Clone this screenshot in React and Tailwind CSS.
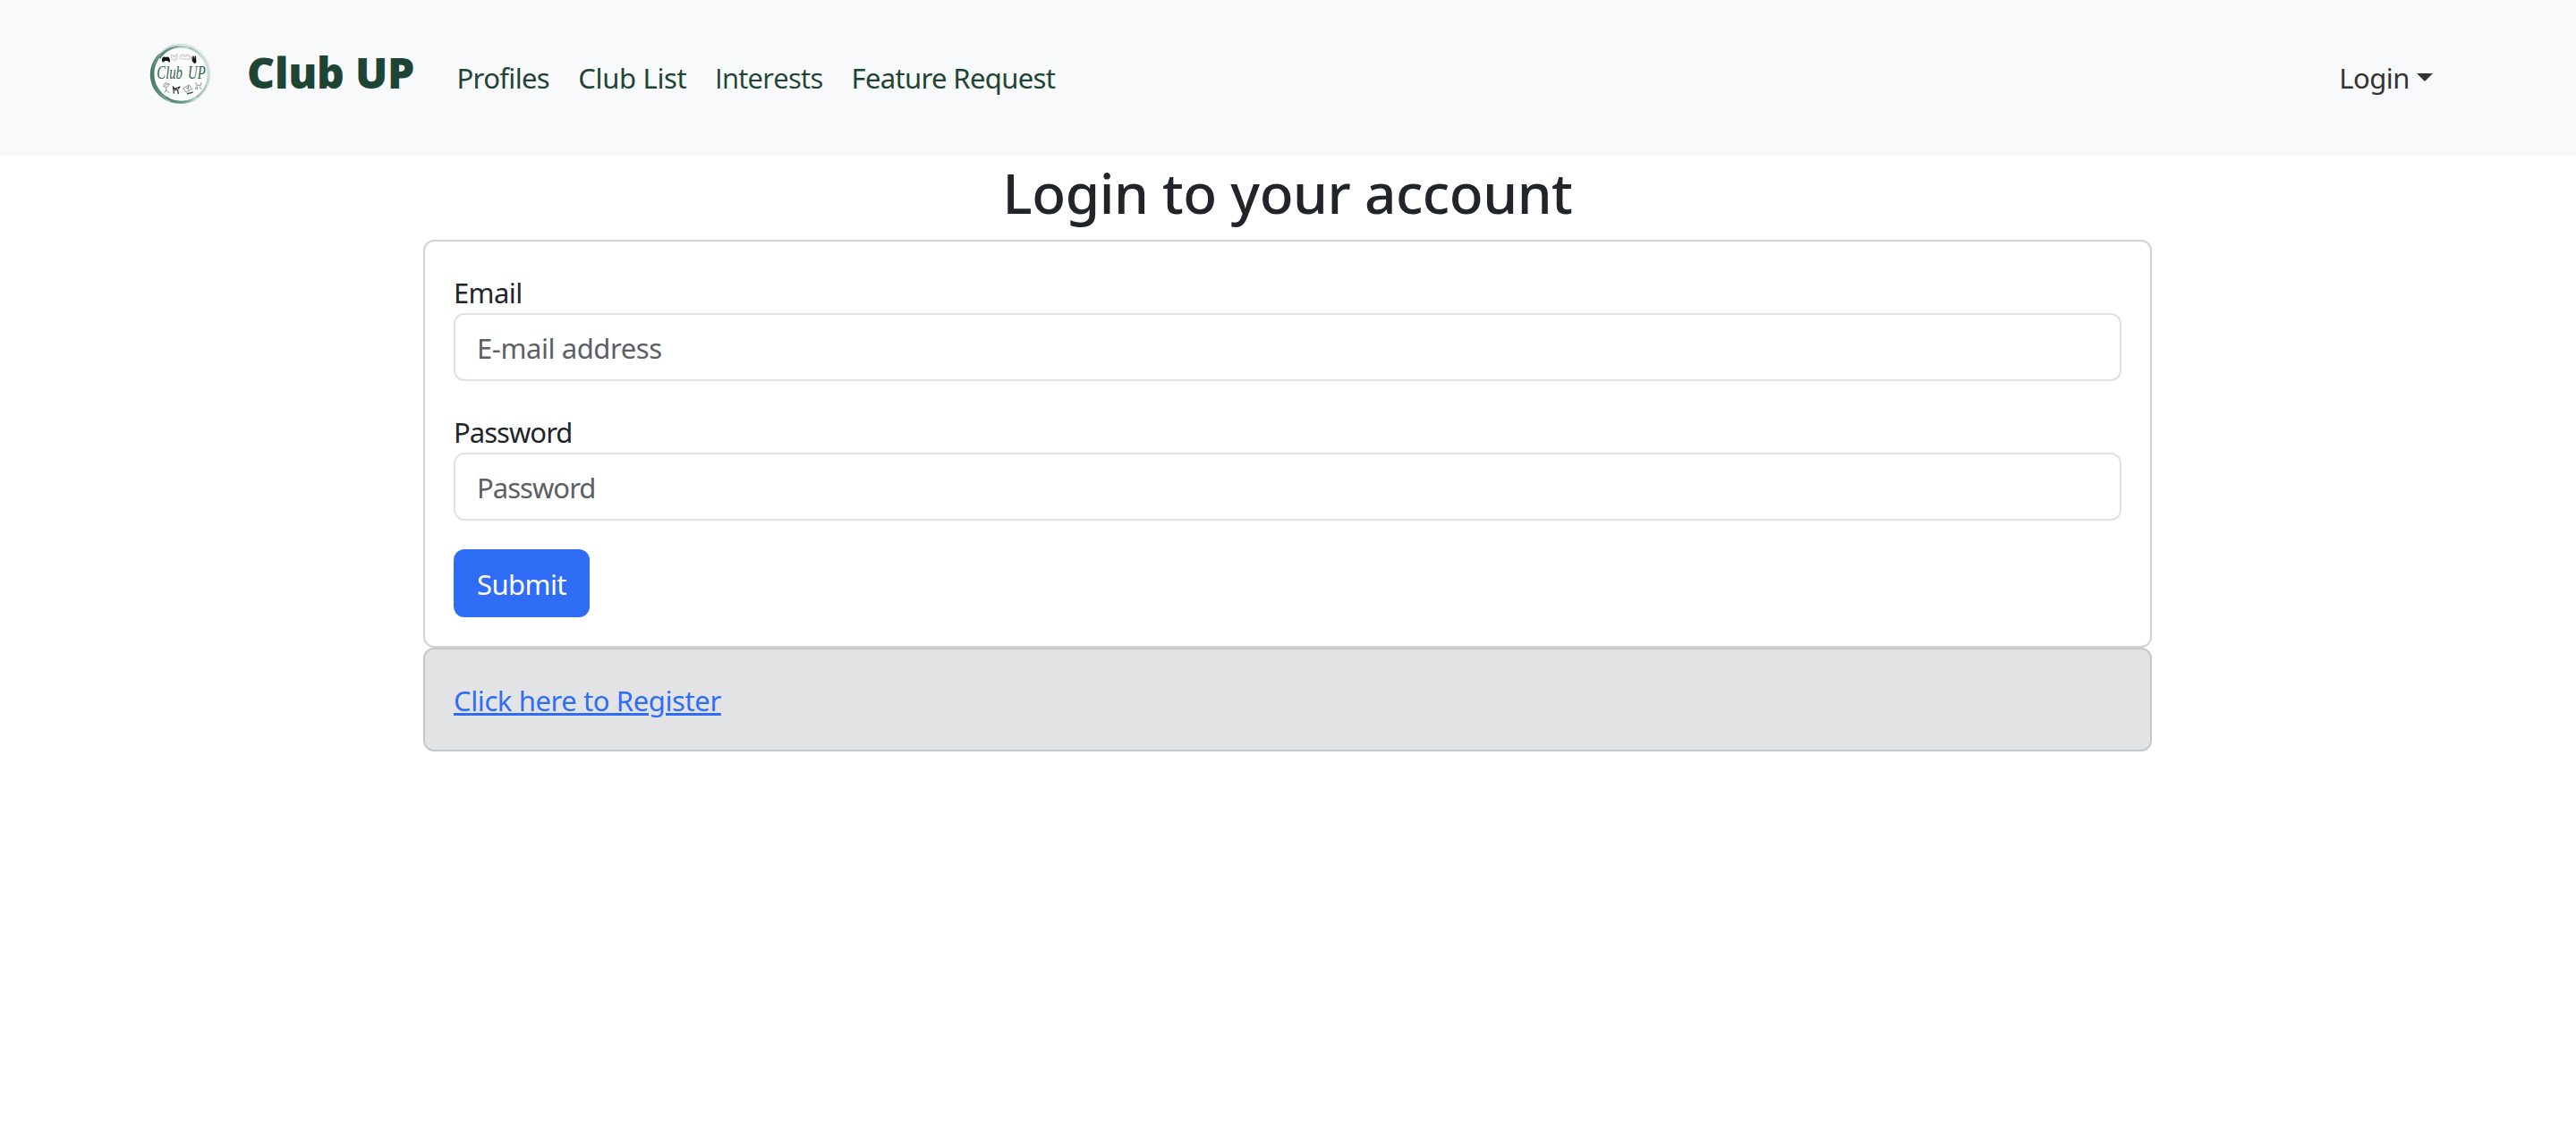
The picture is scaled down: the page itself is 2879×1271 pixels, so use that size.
import React from "react";

const navLinks = [
  { label: "Profiles", style: "w-[135.8px] tracking-[-0.64px]" },
  { label: "Club List", style: "w-[152.7px] tracking-[-0.33px]" },
  { label: "Interests", style: "w-[152.5px] font-['Open_Sans',sans-serif] tracking-[-0.7px]" },
  { label: "Feature Request", style: "tracking-[-0.65px]" },
];

function Logo() {
  return (
    <svg viewBox="0 0 225 225" className="size-[75px] shrink-0 overflow-visible" aria-label="Club UP logo">
      <defs>
        <linearGradient id="ring" x1="0" y1="0.6" x2="1" y2="0.35">
          <stop offset="0" stopColor="#477a69" />
          <stop offset="0.5" stopColor="#6f9c8c" />
          <stop offset="1" stopColor="#cfe0d9" />
        </linearGradient>
      </defs>
      <circle cx="111" cy="113" r="98" fill="#fbfdfc" />
      <g fill="none" stroke="url(#ring)">
        <circle cx="112" cy="113" r="93" strokeWidth="6" />
        <circle cx="108" cy="116" r="94" strokeWidth="5" opacity="0.8" />
        <circle cx="113" cy="110" r="97" strokeWidth="2" opacity="0.7" />
        <circle cx="113" cy="116" r="96" strokeWidth="2" opacity="0.7" />
        <path d="M42 48A92 92 0 0 0 76 202" strokeWidth="10" />
        <path d="M60 190A92 92 0 0 0 165 192" strokeWidth="6" />
        <path d="M40 60A92 92 0 0 1 140 24" strokeWidth="5" />
      </g>
      <path d="M48 68c0-10 4-14 9-12h8c6-1 9 4 10 12 0 7-4 7-8 1h-9c-4 6-9 6-10-1Z" fill="#151515" />
      <path d="M150 55l3 11-2-14 4 1 2 10 1-11 4 2 1 15c2 4-3 11-6 9l-8-8-1-14Z" fill="#151515" />
      <path
        d="M80 48q4 7 20-1l-3 18q-8 8-14 0q-7-8-3-17Zm5 7h11m-9 7h7M107 63h37M109 60V50q9-5 17 1 8-7 17 1v10M112 54q8-3 13 2 8-6 15-1"
        fill="none"
        stroke="#a9b1ad"
        strokeWidth="2"
      />
      <path
        d="M53 151q7-13 14-6 8-2 4 7-5 8-12 4-8 2-6-5Zm9 7 1 12-8 4m9-6 9 9M57 151l12-4M161 141l4 10h13l2-10m-17 14-3 10m14-10 6 10m-14-10v10M119 161l20-11 9 14-19 11Zm10 0 9-2m-1-7-2 17"
        fill="none"
        stroke="#777f7b"
        strokeWidth="2.5"
      />
      <path d="M84 154l6 9 12-4 7-4m-23 1 2 23m2-16 11 4 2 13m0-17 5-7m-13 6-3 8" fill="none" stroke="#202624" strokeWidth="3.5" />
      <path d="M132 180l20-6" stroke="#555" strokeWidth="5" />
      <text
        x="31"
        y="128"
        textLength="163"
        lengthAdjust="spacingAndGlyphs"
        fill="#315f4d"
        fontFamily="Liberation Serif, serif"
        fontStyle="italic"
        fontSize="60"
        wordSpacing="10"
      >
        Club UP
      </text>
    </svg>
  );
}

function Field({ label, type, placeholder, labelStyle, inputStyle }) {
  return (
    <label className="block">
      <span className={`block h-[47px] leading-[48px] ${labelStyle}`}>{label}</span>
      <input
        type={type}
        placeholder={placeholder}
        className={`block h-[76px] w-full rounded-xl border-2 border-[#dee2e6] bg-white pt-[2px] pr-6 pl-[24px] outline-none placeholder:text-[#5c6064] placeholder:opacity-100 ${inputStyle}`}
      />
    </label>
  );
}

export default function App() {
  return (
    <div className="min-h-screen bg-white font-['Noto_Sans',sans-serif] text-[31px] leading-[48px] font-normal text-[#212529]">
      <nav className="flex h-[175px] items-start bg-[#f8f9fb] pr-[160px] pl-[165px] text-[#1e4434]">
        <a className="mt-[45px] flex items-start">
          <Logo />
          <span className="ml-[36px] w-[234.5px] text-[48px] leading-[72px] font-black tracking-[-0.25px] whitespace-nowrap">
            Club UP
          </span>
        </a>
        <div className="mt-[63px] flex whitespace-nowrap">
          {navLinks.map((link) => (
            <a key={link.label} className={link.style}>{link.label}</a>
          ))}
        </div>
        <button className="mt-[63px] ml-auto flex items-start tracking-[-0.5px] text-[#333333]">
          Login
          <svg viewBox="0 0 18 9" className="mt-[19px] ml-[8px] h-[9px] w-[18px]">
            <path d="M0 0H18L9 9Z" fill="currentColor" />
          </svg>
        </button>
      </nav>

      <main className="ml-[473px] w-[1932px]">
        <h1 className="h-[93px] pt-[2px] text-center text-[62px] leading-[77px] font-medium tracking-[-0.46px]">
          Login to your account
        </h1>
        <form className="h-[456px] rounded-xl border-2 border-[#d2d2d2] px-8 pt-[33px]">
          <Field label="Email" type="email" placeholder="E-mail address" labelStyle="tracking-[-0.62px]" inputStyle="tracking-[-0.42px]" />
          <div className="mt-[33px]">
            <Field label="Password" type="password" placeholder="Password" labelStyle="tracking-[-0.97px]" inputStyle="tracking-[-0.97px]" />
          </div>
          <button type="button" className="mt-8 block h-[76px] w-[152px] rounded-xl bg-[#306df6] pt-[2px] tracking-[-0.58px] text-white">
            Submit
          </button>
        </form>
        <div className="h-[116px] rounded-xl border-2 border-[#c4c8cb] bg-[#e2e3e5] px-8 pt-[33px]">
          <a className="tracking-[-0.4px] text-[#306df6] underline decoration-[3px] underline-offset-[2px]">
            Click here to Register
          </a>
        </div>
      </main>
    </div>
  );
}
